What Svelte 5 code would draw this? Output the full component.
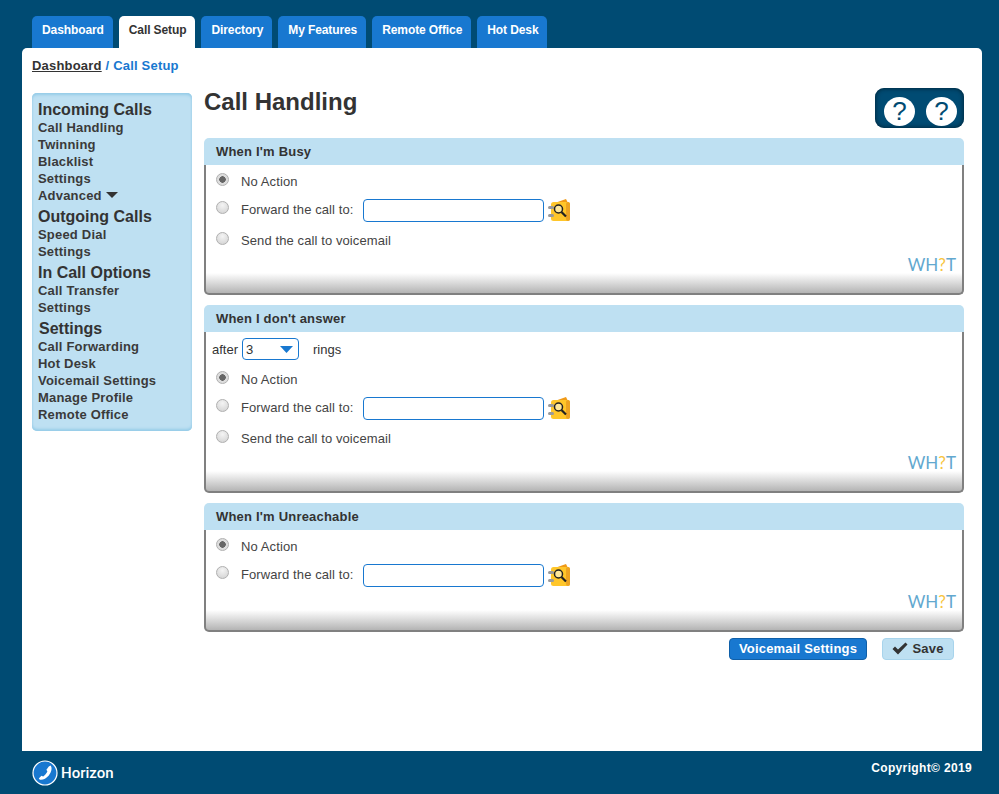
<script>
	const tabs = ["Dashboard", "Call Setup", "Directory", "My Features", "Remote Office", "Hot Desk"];

	const menu = [
		{ title: "Incoming Calls", links: ["Call Handling", "Twinning", "Blacklist", "Settings", "Advanced"] },
		{ title: "Outgoing Calls", links: ["Speed Dial", "Settings"] },
		{ title: "In Call Options", links: ["Call Transfer", "Settings"] },
		{ title: "Settings", links: ["Call Forwarding", "Hot Desk", "Voicemail Settings", "Manage Profile", "Remote Office"] }
	];

	const panels = [
		{ id: "busy", title: "When I'm Busy", rings: false, voicemail: true },
		{ id: "noanswer", title: "When I don't answer", rings: true, voicemail: true },
		{ id: "unreachable", title: "When I'm Unreachable", rings: false, voicemail: false }
	];
</script>

<div class="page">
	<nav class="tabs">
		{#each tabs as tab}
			<a class="tab" class:active={tab === "Call Setup"} href="#top">{tab}</a>
		{/each}
	</nav>

	<main class="sheet">
		<div class="crumbs"><a href="#top">Dashboard</a> / Call Setup</div>

		<div class="columns">
			<aside class="side">
				{#each menu as group}
					<h3 class:indent={group.title === "Settings"}>{group.title}</h3>
					{#each group.links as link}
						<a href="#top">{link}{#if link === "Advanced"}<span class="caret"></span>{/if}</a>
					{/each}
				{/each}
			</aside>

			<section class="content">
				<div class="head">
					<h1>Call Handling</h1>
					<div class="help">
						<span>?</span>
						<span>?</span>
					</div>
				</div>

				{#each panels as panel}
					<div class="panel">
						<h2>{panel.title}</h2>
						<div class="box" class:rings={panel.rings} class:short={!panel.voicemail}>
							{#if panel.rings}
								<div class="after">
									after
									<span class="picker">
										<select>
											<option>3</option>
										</select>
										<svg width="13" height="7" viewBox="0 0 13 7"><path d="M0 0h13L6.5 7z" fill="#1878d0" /></svg>
									</span>
									<span class="word">rings</span>
								</div>
							{/if}
							<label class="row first">
								<input type="radio" name={panel.id} checked />
								<span>No Action</span>
							</label>
							<label class="row forward">
								<input type="radio" name={panel.id} />
								<span>Forward the call to:</span>
								<input class="field" type="text" />
								<svg class="book" width="24" height="24" viewBox="0 0 24 24">
									<path d="M5 6 L19 1 L21 5 Z" fill="#f09a18" />
									<rect x="4" y="4" width="19" height="19" rx="2.5" fill="#ffc62a" />
									<rect x="19" y="4" width="4" height="19" rx="2" fill="#eda322" />
									<rect x="1" y="8" width="6" height="3" rx="1.5" fill="#9a9a9a" />
									<rect x="1" y="16" width="6" height="3" rx="1.5" fill="#9a9a9a" />
									<circle cx="11.5" cy="11" r="4" fill="#ffe89a" stroke="#222" stroke-width="1.5" />
									<path d="M14.5 14 L19 18.5" stroke="#222" stroke-width="2.2" />
								</svg>
							</label>
							{#if panel.voicemail}
								<label class="row">
									<input type="radio" name={panel.id} />
									<span>Send the call to voicemail</span>
								</label>
							{/if}
							<div class="what">WH<span>?</span>T</div>
						</div>
					</div>
				{/each}

				<div class="actions">
					<button class="primary">Voicemail Settings</button>
					<button class="save">
						<svg width="16" height="13" viewBox="0 0 16 13"><path d="M0.5 7 L3 4.5 L6 7.5 L13.5 0.5 L15.5 2.5 L6 12.5 Z" fill="#333" /></svg>
						Save
					</button>
				</div>
			</section>
		</div>
	</main>

	<footer class="foot">
		<div class="brand">
			<svg width="26" height="26" viewBox="0 0 26 26">
				<circle cx="13" cy="13" r="12" fill="#1878d0" stroke="#fff" stroke-width="1.2" />
				<path d="M18.6 5.6 C20.4 8 19.6 12 16.8 15.4 C14 18.6 10.4 20.4 7.6 19.6 L6.8 18.6 L9.4 15.8 L11.2 16.4 C12.6 15.6 14.8 13 15.4 11.4 L14.4 9.8 L16.8 6.4 Z" fill="#fff" />
			</svg>
			<span>Horizon</span>
		</div>
		<div class="copy">Copyright© 2019</div>
	</footer>
</div>

<style>
	:global(body) {
		margin: 0;
		background: #004b73;
	}

	.page {
		height: 794px;
		display: flex;
		flex-direction: column;
		font-family: "Liberation Sans", Arial, sans-serif;
		color: #333;
	}

	.tabs {
		display: flex;
		gap: 6px;
		padding: 16px 0 0 32px;
		height: 32px;
	}

	.tab {
		padding: 0 9px 0 10px;
		line-height: 28px;
		font-size: 12px;
		font-weight: bold;
		letter-spacing: -0.1px;
		color: #fff;
		background: #1878d0;
		border-radius: 5px 5px 0 0;
		text-decoration: none;
		white-space: nowrap;
	}

	.tab.active {
		color: #333;
		background: #fff;
	}

	.sheet {
		flex: 1;
		margin: 0 17px 0 22px;
		padding: 9px 18px 0 10px;
		background: #fff;
		border-radius: 5px 5px 0 0;
	}

	.crumbs {
		font-size: 13px;
		font-weight: bold;
		letter-spacing: 0.2px;
		line-height: 18px;
		color: #1878d0;
	}

	.crumbs a {
		color: #333;
	}

	.columns {
		display: flex;
		gap: 12px;
		margin-top: 18px;
	}

	.side {
		box-sizing: border-box;
		width: 160px;
		height: 338px;
		padding: 4px 6px;
		background: #bee0f2;
		border-radius: 5px;
		box-shadow: inset 0 3px 3px -1px #96cce8, inset 0 -3px 3px -1px #96cce8, inset 0 0 2px #96cce8;
		display: flex;
		flex-direction: column;
	}

	.side h3 {
		margin: 4px 0 0;
		font-size: 16px;
		line-height: 18px;
		color: #333;
	}

	.side h3.indent {
		margin-left: 1px;
	}

	.side a {
		font-size: 13px;
		font-weight: bold;
		letter-spacing: 0.2px;
		line-height: 17px;
		color: #3a3a3a;
		text-decoration: none;
	}

	.caret {
		display: inline-block;
		margin-left: 4px;
		border: 6px solid transparent;
		border-top: 6px solid #333;
		border-bottom: 0;
		vertical-align: 2px;
	}

	.content {
		flex: 1;
		min-width: 0;
		margin-top: -4px;
	}

	.head {
		display: flex;
		justify-content: space-between;
		height: 49px;
	}

	h1 {
		margin: 0;
		font-size: 24px;
		line-height: 26px;
		color: #333;
	}

	.help {
		box-sizing: border-box;
		width: 89px;
		height: 40px;
		margin-top: -1px;
		padding: 6px 7px 0 9px;
		display: flex;
		align-items: center;
		justify-content: space-between;
		background: #004b73;
		border-radius: 9px;
		box-shadow: inset 0 0 5px #001e2e;
	}

	.help span {
		width: 31px;
		height: 29px;
		border-radius: 50%;
		background: #fff;
		color: #004b73;
		font-size: 26px;
		line-height: 29px;
		text-align: center;
	}

	.panel {
		margin-bottom: 10px;
	}

	.panel h2 {
		margin: 0;
		padding: 0 12px;
		font-size: 13px;
		line-height: 27px;
		letter-spacing: 0.2px;
		color: #333;
		background: #bee0f2;
		border-radius: 5px 5px 0 0;
	}

	.box {
		box-sizing: border-box;
		position: relative;
		height: 130px;
		padding: 3px 10px 0;
		border: 2px solid #808080;
		border-top: 0;
		border-radius: 0 0 5px 5px;
		background: linear-gradient(to top, #b4b4b4, #fff 20px);
		font-size: 13px;
	}

	.box.rings {
		height: 161px;
		padding-top: 6px;
	}

	.box.short {
		height: 102px;
	}

	.after {
		display: flex;
		align-items: center;
		height: 22px;
		margin: 0 0 6px -4px;
		gap: 4px;
	}

	.picker {
		position: relative;
		display: block;
		height: 22px;
	}

	.picker svg {
		position: absolute;
		top: 8px;
		right: 6px;
		pointer-events: none;
	}

	select {
		appearance: none;
		box-sizing: border-box;
		display: block;
		width: 57px;
		height: 22px;
		padding: 0 3px;
		font: 13px "Liberation Sans", Arial, sans-serif;
		color: #333;
		background: #fff;
		border: 1px solid #1878d0;
		border-radius: 4px;
	}

	.word {
		margin-left: 10px;
	}

	.row {
		display: flex;
		align-items: center;
		height: 27px;
		letter-spacing: 0.1px;
		color: #444;
	}

	.row.forward {
		height: 30px;
		margin-bottom: 2px;
	}

	.row.forward span {
		margin-top: -2px;
	}

	.row input[type="radio"] {
		appearance: none;
		box-sizing: border-box;
		width: 13px;
		height: 13px;
		margin: -5px 12px 0 0;
		border: 1px solid #b0b0b0;
		border-radius: 50%;
		background: radial-gradient(circle at 50% 30%, #f4f4f4, #d0d0d0);
	}

	.row input[type="radio"]:checked {
		background: radial-gradient(circle, #666 0 3px, #ddd 3.5px);
	}

	.field {
		box-sizing: border-box;
		width: 181px;
		height: 23px;
		margin-left: 9px;
		border: 1px solid #1878d0;
		border-radius: 4px;
		background: #fff;
	}

	.book {
		margin-left: 3px;
	}

	.what {
		position: absolute;
		right: 6px;
		bottom: 19px;
		font-family: Lato, sans-serif;
		font-size: 17px;
		line-height: 18px;
		color: #62a8cf;
	}

	.what span {
		color: #f8c540;
	}

	.actions {
		display: flex;
		justify-content: flex-end;
		gap: 15px;
		margin: -4px 10px 0 0;
	}

	button {
		box-sizing: border-box;
		height: 22px;
		padding: 0 0 2px;
		border-radius: 4px;
		font: bold 13px "Liberation Sans", Arial, sans-serif;
		letter-spacing: 0.2px;
	}

	.primary {
		width: 138px;
		color: #fff;
		background: #1878d0;
		border: 1px solid #0f5fa8;
	}

	.save {
		width: 72px;
		color: #333;
		background: #bee0f2;
		border: 1px solid #a8d4ec;
		display: flex;
		align-items: center;
		justify-content: center;
		gap: 4px;
	}

	.foot {
		height: 43px;
		display: flex;
		justify-content: space-between;
		padding: 9px 27px 0 32px;
		box-sizing: border-box;
		color: #fff;
	}

	.brand {
		display: flex;
		align-items: center;
		gap: 3px;
		height: 26px;
		font-family: Roboto, sans-serif;
		font-size: 15px;
		font-weight: 500;
	}

	.copy {
		font-size: 12px;
		font-weight: bold;
		letter-spacing: 0.35px;
		line-height: 16px;
	}
</style>
